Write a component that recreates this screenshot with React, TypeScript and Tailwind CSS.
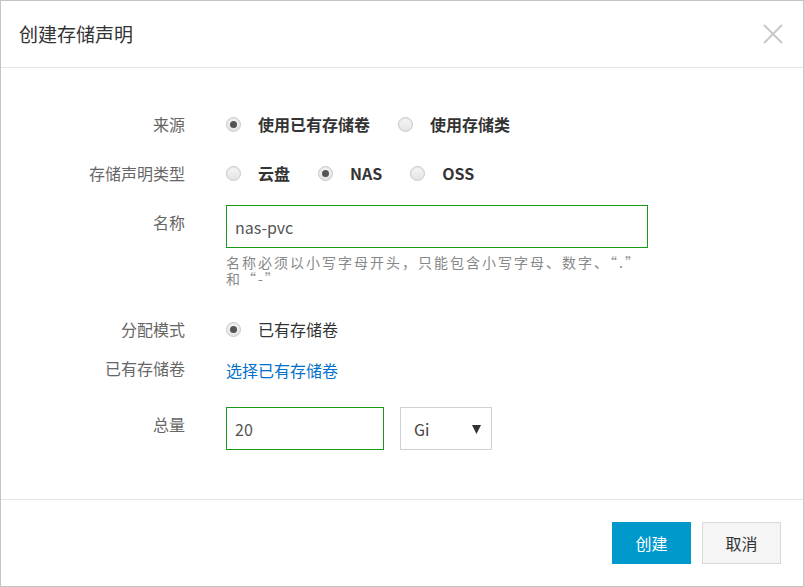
import React from "react";

function Radio({ checked }: { checked?: boolean }) {
  return (
    <span className="flex h-[15px] w-[15px] items-center justify-center rounded-full border border-[#c8c8c8] bg-gradient-to-b from-[#f6f6f6] to-[#e4e4e4] shadow-[inset_0_1px_1px_rgba(0,0,0,0.08)]">
      {checked && <span className="h-[7px] w-[7px] rounded-full bg-[#555]" />}
    </span>
  );
}

function Option({ checked, label, bold = true }: { checked?: boolean; label: string; bold?: boolean }) {
  return (
    <label className="flex items-center">
      <Radio checked={checked} />
      <span className={`ml-[17px] text-[16px] text-[#333] ${bold ? "font-bold" : ""}`}>{label}</span>
    </label>
  );
}

function Row({ label, children, labelTop = 0 }: { label: string; children: React.ReactNode; labelTop?: number }) {
  return (
    <div className="flex items-start">
      <div
        className={`w-[184px] shrink-0 text-right text-[16px] leading-[20px] text-[#666] ${
          labelTop ? "mt-[7px]" : ""
        }`}
      >
        {label}
      </div>
      <div className="ml-[41px] flex-1">{children}</div>
    </div>
  );
}

export default function App() {
  return (
    <div
      className="flex h-[587px] w-[804px] flex-col border border-[#c4c4c4] bg-white"
      style={{ fontFamily: '"Noto Sans CJK SC", "Open Sans", sans-serif' }}
    >
      <div className="flex h-[67px] shrink-0 items-center justify-between border-b border-[#e5e5e5] pl-[18px] pr-[20px]">
        <h1 className="text-[19px] font-normal text-[#333]">创建存储声明</h1>
        <button className="text-[#c8c8c8]" aria-label="close">
          <svg width="20" height="20" viewBox="0 0 20 20" fill="none" stroke="currentColor" strokeWidth="2">
            <path d="M1 1 L19 19 M19 1 L1 19" />
          </svg>
        </button>
      </div>

      <div className="flex flex-1 flex-col pt-[46px]">
        <Row label="来源">
          <div className="flex h-[20px] items-center gap-[28px]">
            <Option checked label="使用已有存储卷" />
            <Option label="使用存储类" />
          </div>
        </Row>

        <div className="mt-[29px]">
          <Row label="存储声明类型">
            <div className="flex h-[20px] items-center gap-[28px]">
              <Option label="云盘" />
              <Option checked label="NAS" />
              <Option label="OSS" />
            </div>
          </Row>
        </div>

        <div className="mt-[22px]">
          <Row label="名称" labelTop={1}>
            <div className="w-[422px]">
              <div className="flex h-[43px] items-center border border-[#1a9a1a] px-[8px] text-[16px] text-[#555]">
                nas-pvc
              </div>
              <p className="mt-[6px] w-[424px] text-[14px] leading-[16px] tracking-[2px] text-[#888] [line-break:anywhere]">
                名称必须以小写字母开头，只能包含小写字母、数字、“.”和“-”
              </p>
            </div>
          </Row>
        </div>

        <div className="mt-[33px]">
          <Row label="分配模式">
            <div className="flex h-[20px] items-center">
              <Option checked label="已有存储卷" bold={false} />
            </div>
          </Row>
        </div>

        <div className="mt-[19px]">
          <Row label="已有存储卷">
            <a className="text-[16px] leading-[20px] text-[#0070cc]">选择已有存储卷</a>
          </Row>
        </div>

        <div className="mt-[25px]">
          <Row label="总量" labelTop={1}>
            <div className="flex items-center gap-[16px]">
              <div className="flex h-[43px] w-[158px] items-center border border-[#1a9a1a] px-[8px] text-[16px] text-[#555]">
                20
              </div>
              <div className="flex h-[43px] w-[92px] items-center justify-between border border-[#d0d0d0] pl-[13px] pr-[10px] text-[16px] text-[#444]">
                <span>Gi</span>
                <svg width="9" height="10" viewBox="0 0 9 10" className="text-[#333]">
                  <path d="M0 1 H9 L4.5 10 Z" fill="currentColor" />
                </svg>
              </div>
            </div>
          </Row>
        </div>
      </div>

      <div className="flex h-[87px] shrink-0 items-center justify-end gap-[11px] border-t border-[#e5e5e5] pr-[22px]">
        <button className="h-[42px] w-[79px] bg-[#0099cc] text-[16px] text-white">创建</button>
        <button className="h-[42px] w-[79px] border border-[#d9d9d9] bg-[#f5f5f5] text-[16px] text-[#333]">取消</button>
      </div>
    </div>
  );
}
